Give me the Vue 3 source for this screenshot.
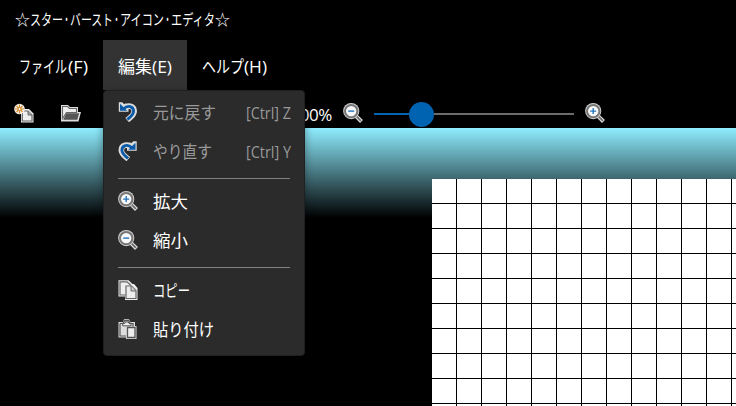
<script setup>
import { h } from 'vue'

const Label = ({ segs, width, size = 17 }) =>
  h('svg', { width, height: 24, class: 'label', style: { fontSize: size + 'px' } },
    segs.map(([t, x, w]) => h('text', { x, y: 18, textLength: w, lengthAdjust: 'spacingAndGlyphs', fill: 'currentColor' }, t)))
Label.props = ['segs', 'width', 'size']

const shapes = {
  undo: `<path d="M6 6.500C9.500 2.300 16.200 4 16.200 9.200c0 3.800-3.200 5.600-7 9" fill="none" stroke="#dcdcdc" stroke-width="5.600"/><path d="M.8.300h3.400l2 2 1.600-1 .5 3 2.200 2.300v3.200H.8z" fill="#dcdcdc"/><path d="M6 6.500C9.500 2.800 15.600 4.300 15.600 9.200c0 3.400-3 5.400-6.200 8.400" fill="none" stroke="#0a5aa8" stroke-width="2.800"/><path d="M2 1.800v7h7.200z" fill="#0a5aa8"/>`,
  zoom: `<path d="M12.300 12.300l6.200 6.200" stroke="#ddd" stroke-width="4"/><path d="M12.700 12.700l5.200 5.200" stroke="#6c6c6c" stroke-width="1.700"/><circle cx="8.200" cy="8.100" r="8.100" fill="#d0d0d0"/><circle cx="8.200" cy="8.100" r="6.200" fill="#f8f8f8" stroke="#777" stroke-width="2"/>`,
  fresh: `<path d="M7 6h8l4.500 4.500V19.500H7z" fill="#ededed"/><path d="M8.300 8h5.700l4 4v6H8.300z" fill="#eee" stroke="#666" stroke-width="1.200"/><path d="M14 8v4h4" fill="#aaa" stroke="#666"/><circle cx="5.500" cy="6" r="5.300" fill="#f4efe7"/><path d="M5.500 1.500v9M1 6h9M2.500 3l6 6M8.500 3l-6 6" stroke="#d58b29" stroke-width="1.100"/><circle cx="5.500" cy="6" r="1.500" fill="#fff" stroke="#c47a1b" stroke-width=".8"/>`,
  open: `<path d="M0 2h7l2 2h8v5h3l-2.500 9.500H0z" fill="#ddd"/><path d="M1.500 15V3.500h5l2 2h7V9.500H5.500l-4 6z" fill="#eee" stroke="#666" stroke-width="1.100"/><path d="M5.300 10.300h12.800L16.300 16.700H2.300z" fill="#555"/>`,
  copy: `<path d="M.5.300h10l4 3.700H16l3.500 4V20H7v-3.500H.5z" fill="#eee"/><path d="M7.500 15H2V1.800h7l4 3.700" fill="#eee" stroke="#666" stroke-width="1.200"/><path d="M8 6h5.500l4.500 4.500v8H8z" fill="#eee" stroke="#666" stroke-width="1.200"/><path d="M13 6v5h5" fill="#ccc" stroke="#666"/>`,
  paste: `<path d="M.5 3H5l1-2.700h5L12.500 3H17v4h1.500v13H8v-1.500H.5z" fill="#ddd"/><path d="M2 4.500h3l1.500-2.800h4.200L12.300 4.500H15v3M8 17H2V4.500" fill="none" stroke="#555" stroke-width="1.200"/><path d="M4.700 6.800V4.500h2L7.300 3h3l.7 1.500h2v2.300z" fill="#eee" stroke="#555"/><path d="M9.500 8.500H17v10H9.500z" fill="#eee" stroke="#555" stroke-width="1.300"/>`
}
shapes.redo = `<g transform="matrix(-1 0 0 1 19.500 0)">${shapes.undo}</g>`
shapes.zoomOut = shapes.zoom + '<path d="M5.200 8.100h6" stroke="#2374bd" stroke-width="1.400"/>'
shapes.zoomIn = shapes.zoom + '<path d="M5.200 8.100h6M8.200 5.100v6" stroke="#2374bd" stroke-width="1.400"/>'

const Icon = ({ name }) => h('svg', { width: 20, height: 20, viewBox: '0 0 20 20', class: 'icon', innerHTML: shapes[name] })
Icon.props = ['name']

const title = [['☆', 0, 15], ['スター', 15, 33], ['・', 48, 7], ['バースト', 55, 43], ['・', 98, 7], ['アイコン', 105, 44], ['・', 149, 7], ['エディタ', 156, 44], ['☆', 200, 15]]
const menus = [
  { segs: [['ファイル', 0, 48], ['(F)', 49, 20]], width: 69 },
  { segs: [['編集', 0, 34], ['(E)', 34, 20]], width: 54, active: true },
  { segs: [['ヘルプ', 0, 42], ['(H)', 42, 23]], width: 66 }
]
const groups = [
  [
    { icon: 'undo', segs: [['元に戻す', 0, 63]], key: '[Ctrl] Z', off: true },
    { icon: 'redo', segs: [['やり直す', 0, 59]], key: '[Ctrl] Y', off: true }
  ],
  [
    { icon: 'zoomIn', segs: [['拡大', 0, 35]] },
    { icon: 'zoomOut', segs: [['縮小', 0, 35]] }
  ],
  [
    { icon: 'copy', segs: [['コピー', 0, 37]] },
    { icon: 'paste', segs: [['貼り付け', 0, 61]] }
  ]
]
</script>

<template>
  <div class="window">
    <header class="title"><Label :segs="title" :width="217" :size="15" /></header>
    <nav class="menubar">
      <div v-for="(m, i) in menus" :key="i" class="menu" :class="{ active: m.active }">
        <Label :segs="m.segs" :width="m.width" />
      </div>
    </nav>
    <div class="toolbar">
      <Icon name="fresh" /><Icon name="open" class="open" />
      <span class="percent">100%</span>
      <Icon name="zoomOut" />
      <div class="slider"><i class="filled"></i><i class="thumb"></i><i class="rest"></i></div>
      <Icon name="zoomIn" />
    </div>
    <main class="workspace"><div class="grid"></div></main>
    <div class="popup">
      <div v-for="(g, i) in groups" :key="i" class="group">
        <div v-for="item in g" :key="item.icon" class="item" :class="{ off: item.off }">
          <Icon :name="item.icon" />
          <Label class="name" :segs="item.segs" :width="70" />
          <Label v-if="item.key" class="key" :segs="[[item.key, 0, 45]]" :width="45" :size="15.5" />
        </div>
      </div>
    </div>
  </div>
</template>

<style>
body { background: #000; overflow: hidden; }
</style>
<style scoped>
.window { position: relative; width: 736px; height: 406px; overflow: hidden; display: flex; flex-direction: column; background: #000; color: #fff; font-family: "Open Sans", "Noto Sans CJK JP", sans-serif; }
svg { display: block; flex: none; }
.label { overflow: visible; }
.title { height: 33px; padding: 7px 0 0 15px; }
.menubar { height: 50px; display: flex; }
.menu { display: flex; align-items: center; padding: 3px 15px 0; }
.menu:first-child { padding-left: 19px; }
.menu.active { background: #333; }
.toolbar { height: 38px; box-sizing: border-box; display: flex; align-items: center; padding: 10px 0 0 14px; }
.toolbar .icon { margin-top: -2px; }
.open { margin-left: 27px; }
.percent { width: 251px; padding-top: 2px; text-align: right; font-size: 17px; line-height: 20px; letter-spacing: -.4px; margin-right: 11px; }
.slider { width: 200px; margin: 1px 11px 0 11px; display: flex; align-items: center; }
.filled { width: 35px; height: 2px; margin-bottom: 1px; background: #0063b1; }
.thumb { width: 25px; height: 25px; border-radius: 50%; background: #0063b1; }
.rest { flex: 1; height: 2px; margin-bottom: 1px; background: #6c6c6c; }
.workspace { flex: 1; padding: 51px 0 0 432px; background: linear-gradient(#8eedff, #000 90px); }
.grid { height: 227px; background: linear-gradient(90deg, transparent 24px, #000 24px) 0 0 / 25px 25px, linear-gradient(#fff 24px, #000 24px) 0 0 / 25px 25px; }
.popup { position: absolute; left: 103px; top: 90px; width: 202px; height: 266px; box-sizing: border-box; padding: 2px 14px; border: 1px solid #202020; border-radius: 4px; background: #2b2b2b; box-shadow: 0 3px 8px #0006; }
.group + .group { border-top: 1px solid #808080; margin-top: 7px; padding-top: 3px; }
.item { height: 39px; display: flex; align-items: center; }
.item .icon { margin-top: -1px; }
.name { margin: 1px 0 0 15px; }
.key { margin-left: 22.5px; }
.off { color: #999; }
</style>
